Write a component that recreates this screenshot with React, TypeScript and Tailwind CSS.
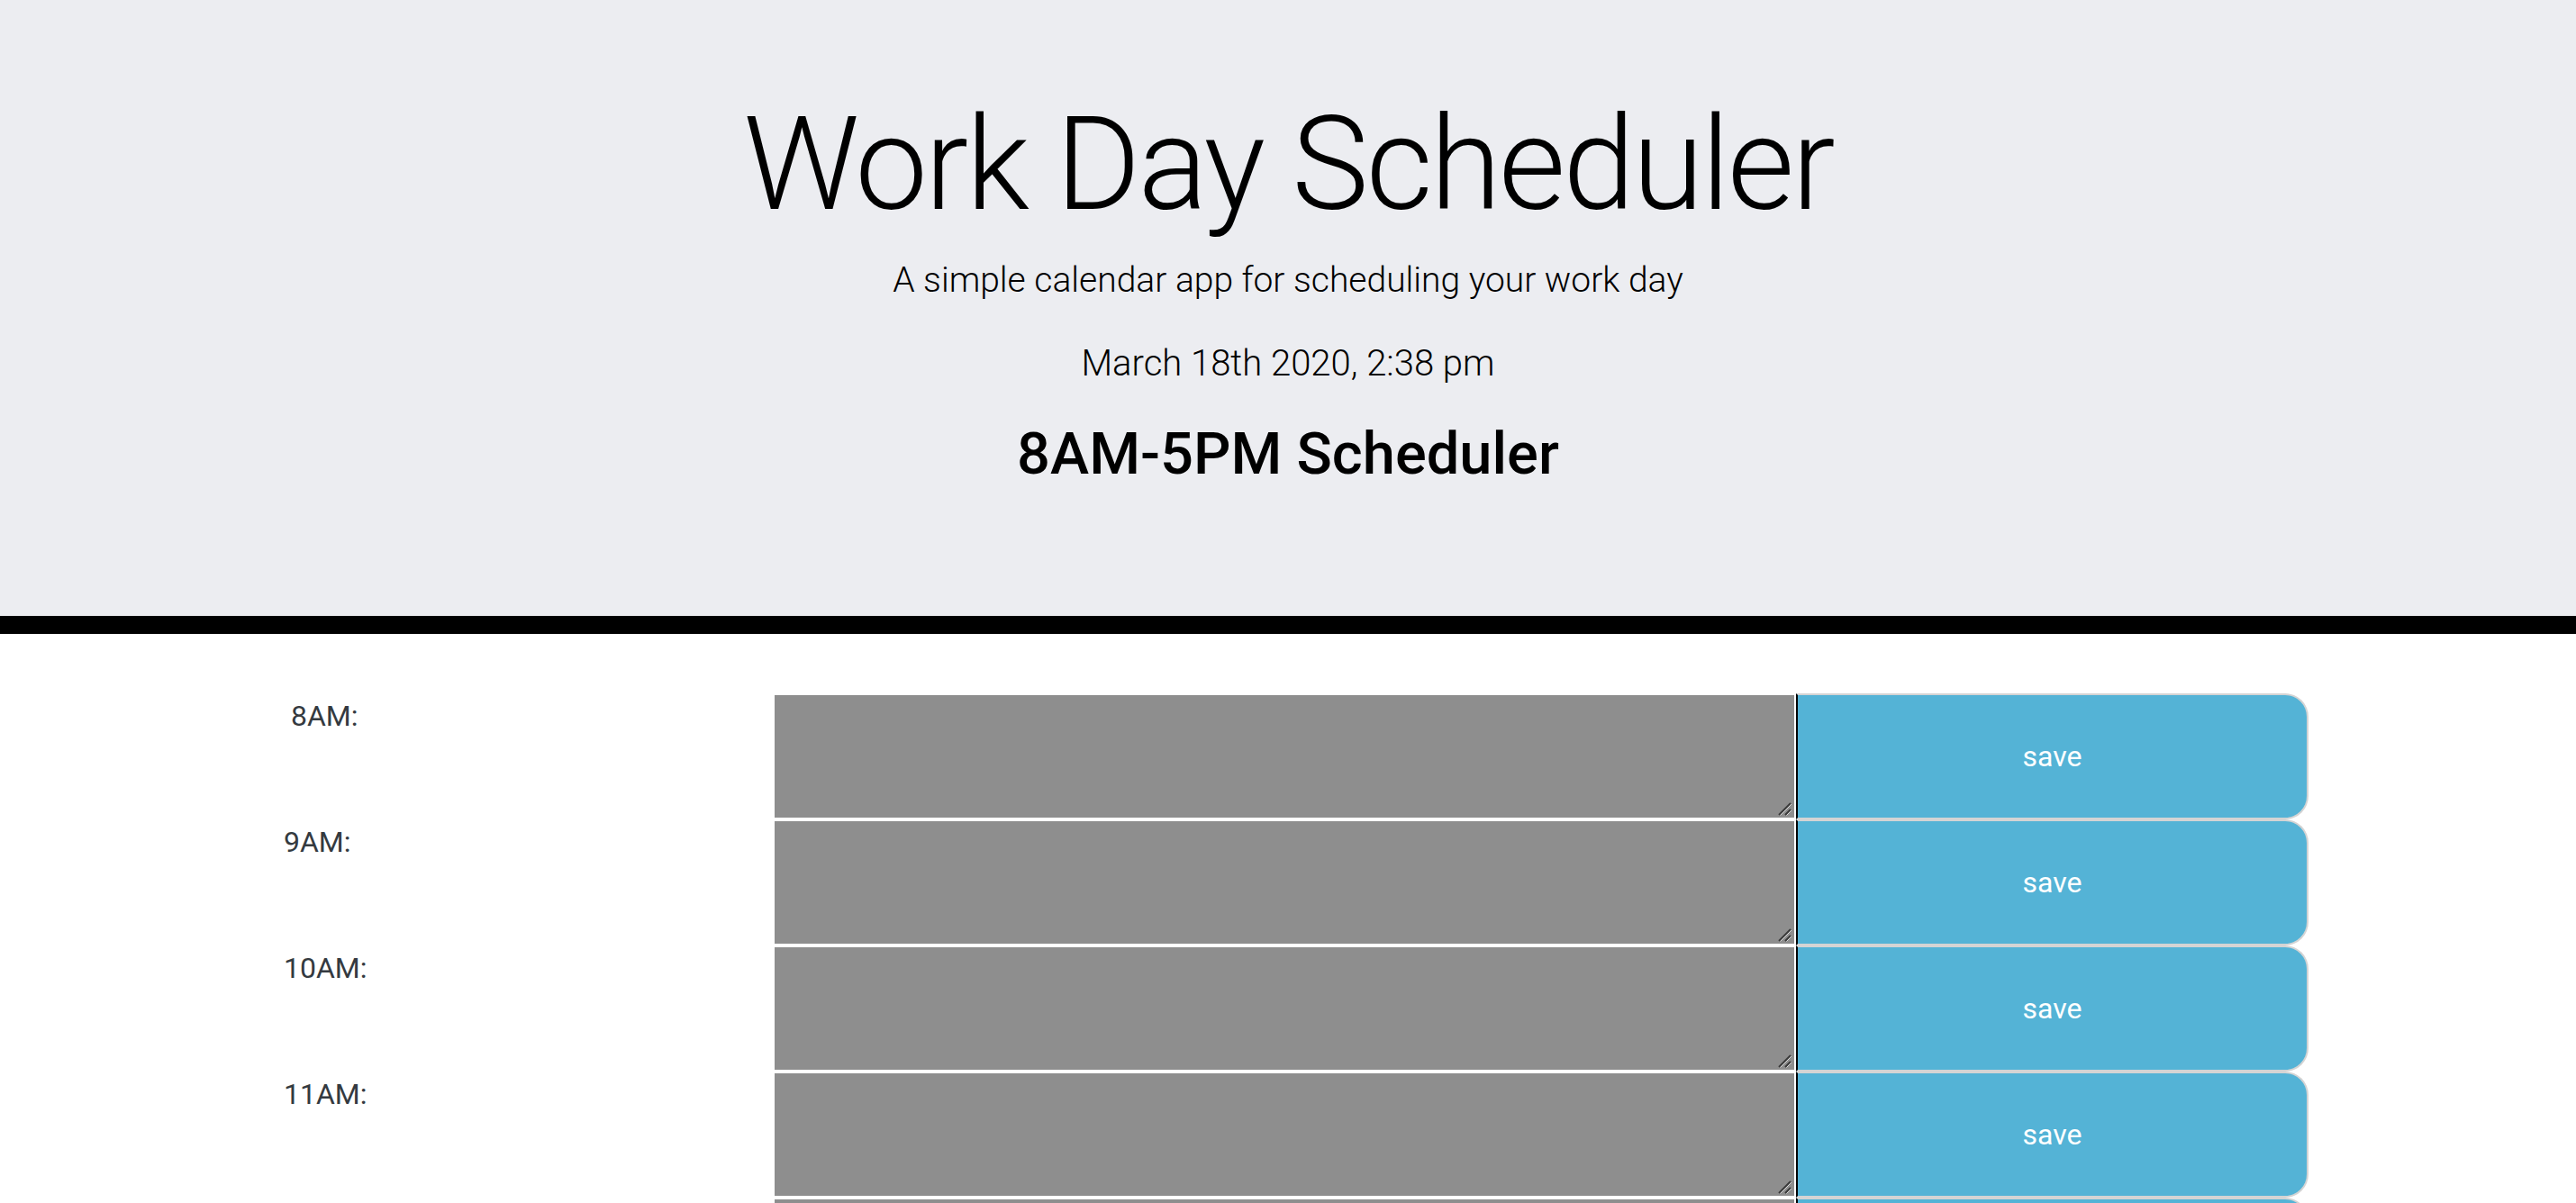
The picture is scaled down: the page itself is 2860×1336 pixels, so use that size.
import React from "react";

const hours = ["8AM", "9AM", "10AM", "11AM", "12PM", "1PM", "2PM", "3PM", "4PM", "5PM"];

// the resize grip chromium draws in the textarea corner
function Grip() {
  return (
    <svg className="pointer-events-none absolute right-[2px] bottom-[2px]" width="16" height="16" viewBox="0 0 16 16">
      <line x1="1" y1="15" x2="14" y2="2" stroke="#3a3a3a" strokeWidth="2" />
      <line x1="2.5" y1="15.5" x2="15" y2="3" stroke="#d8d8d8" strokeWidth="1" />
      <line x1="8" y1="15" x2="14" y2="9" stroke="#3a3a3a" strokeWidth="2" />
      <line x1="9.5" y1="15.5" x2="15" y2="10" stroke="#d8d8d8" strokeWidth="1" />
    </svg>
  );
}

function HourRow({ hour, first }: { hour: string; first?: boolean }) {
  return (
    <div className="flex h-[140px]">
      <div className={`w-[860px] shrink-0 pt-[1px] ${first ? "pl-[323px]" : "pl-[315px]"}`}>
        <span className="text-[32px] leading-[48px] text-[#343a40]">{hour}:</span>
      </div>
      <div className="relative my-[2px] h-[136px] w-[1132px] shrink-0">
        <textarea className="block h-full w-full resize-none bg-[#8e8e8e] text-[32px] text-black outline-none" />
        <Grip />
      </div>
      <button className="ml-[2px] h-[140px] w-[569px] shrink-0 rounded-r-[26px] border-2 border-l-black border-t-[#d4d4d4] border-r-[#d4d4d4] border-b-[#d4d4d4] bg-[#54b3d6] text-[32px] text-white">
        save
      </button>
    </div>
  );
}

export default function App() {
  return (
    <div className="min-h-screen bg-white" style={{ fontFamily: "Roboto, 'Liberation Sans', sans-serif" }}>
      <header className="border-b-[20px] border-black bg-[#ecedf1] pt-[97px] pb-[140px] text-center text-black">
        <h1 className="text-[144px] font-light leading-[172px] tracking-[-3px]">Work Day Scheduler</h1>
        <p className="mt-[19px] text-[39px] font-light leading-[46px]">A simple calendar app for scheduling your work day</p>
        <p className="mt-[47px] text-[40px] font-light leading-[46px]">March 18th 2020, 2:38 pm</p>
        <h2 className="mt-[37px] text-[65px] font-medium leading-[80px]">8AM-5PM Scheduler</h2>
      </header>

      <main className="mt-[66px] pb-10">
        {hours.map((h, i) => (
          <HourRow key={h} hour={h} first={i === 0} />
        ))}
      </main>
    </div>
  );
}
